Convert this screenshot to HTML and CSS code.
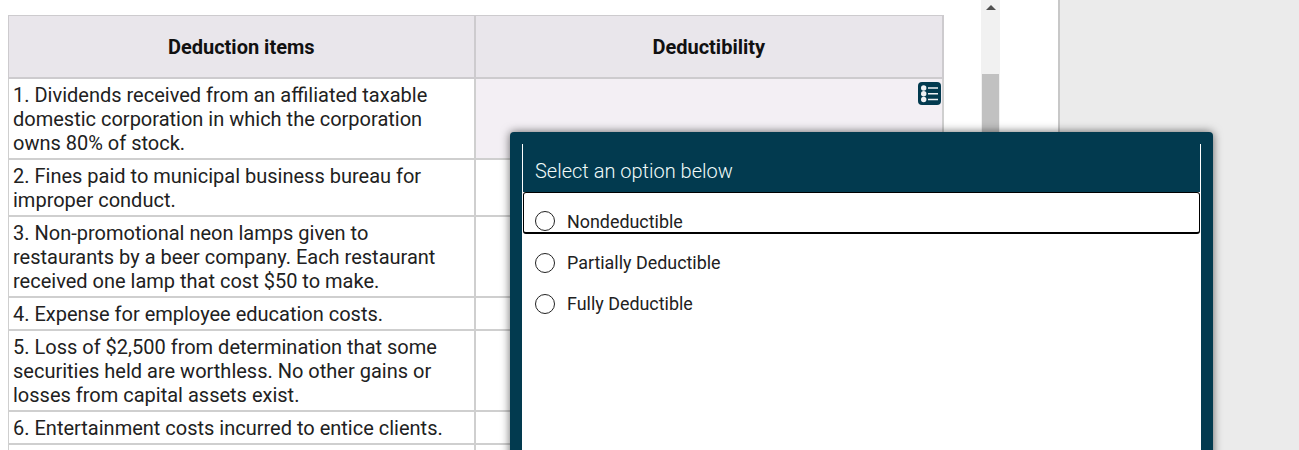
FILE: index.html
```html
<!DOCTYPE html>
<html>

	<head>
		<meta charset="utf-8" />
		<title>Deduction items</title>
		<link rel="stylesheet" href="styles.css">
	</head>

	<body>
		<div class="page">
			<div class="sheet">
				<table class="grid">
					<tr>
						<th class="col-item">Deduction items</th>
						<th>Deductibility</th>
					</tr>
					<tr>
						<td>1. Dividends received from an affiliated taxable domestic corporation in which the corporation owns 80% of stock.</td>
						<td class="answer">
							<span class="list-btn">
								<svg width="23" height="23" viewBox="0 0 23 23">
									<rect width="23" height="23" rx="4" fill="#023a4f"/>
									<circle cx="5.7" cy="6" r="2.7" fill="#eef1f4"/>
									<circle cx="5.7" cy="11.7" r="2.7" fill="#eef1f4"/>
									<circle cx="5.7" cy="17.5" r="2.7" fill="#eef1f4"/>
									<path d="M10 6h10M10 11.7h10M10 17.5h10" stroke="#eef1f4" stroke-width="1.6"/>
								</svg>
							</span>
						</td>
					</tr>
					<tr>
						<td>2. Fines paid to municipal business bureau for improper conduct.</td>
						<td></td>
					</tr>
					<tr>
						<td>3. Non-promotional neon lamps given to restaurants by a beer company. Each restaurant received one lamp that cost $50 to make.</td>
						<td></td>
					</tr>
					<tr>
						<td>4. Expense for employee education costs.</td>
						<td></td>
					</tr>
					<tr>
						<td>5. Loss of $2,500 from determination that some securities held are worthless. No other gains or losses from capital assets exist.</td>
						<td></td>
					</tr>
					<tr>
						<td>6. Entertainment costs incurred to entice clients.</td>
						<td></td>
					</tr>
					<tr>
						<td class="empty"></td>
						<td class="empty"></td>
					</tr>
				</table>
				<div class="scrollbar">
					<span class="arrow-up"></span>
					<span class="thumb"></span>
				</div>
			</div>
			<div class="side"></div>
		</div>

		<div class="modal">
			<div class="modal-inner">
				<div class="modal-title">Select an option below</div>
				<div class="options">
					<label class="option option-focus"><span class="radio"></span>Nondeductible</label>
					<label class="option"><span class="radio"></span>Partially Deductible</label>
					<label class="option"><span class="radio"></span>Fully Deductible</label>
				</div>
			</div>
		</div>
	</body>

</html>
```

FILE: styles.css
```css
*{margin: 0;padding: 0;box-sizing: border-box;}
html,body{height: 450px;overflow: hidden;}
body{
	font-family: Roboto, "Liberation Sans", sans-serif;
	color: #212121;
	background-color: #fff;
}
.page{
	display: flex;
	height: 450px;
}
.sheet{
	display: flex;
	width: 1060px;
	height: 450px;
	padding-left: 8px;
	border-right: 2px solid #c8c8c8;
	background-color: #fff;
}
.side{
	flex: 1;
	background-color: #ebebeb;
}

.grid{
	width: 936px;
	height: 0;
	margin-top: 15px;
	border-collapse: collapse;
	table-layout: fixed;
	font-size: 20px;
	line-height: 24px;
}
.grid th{
	height: 62px;
	padding-top: 2px;
	background-color: #e9e6eb;
	border: 2px solid #cdcbce;
	border-top-width: 1px;
	font-size: 20px;
	font-weight: bold;
	color: #111;
	text-align: center;
}
.col-item{width: 466px;}
.grid td{
	padding: 4px 4px 3px 4px;
	border: 2px solid #cfcfcf;
	vertical-align: top;
}
.grid th:first-child,
.grid td:first-child{border-left-width: 1px;}
.grid td.answer{
	background-color: #f3eff4;
	text-align: right;
	padding: 3px 1px 0 0;
}
.grid td.empty{height: 20px;}
.list-btn{display: block;height: 24px;}

.scrollbar{
	position: relative;
	width: 19px;
	height: 450px;
	margin-left: 37px;
	background-color: #f1f1f1;
}
.arrow-up{
	position: absolute;
	top: 5px;
	left: 5px;
	border-left: 5px solid transparent;
	border-right: 5px solid transparent;
	border-bottom: 5px solid #505050;
}
.thumb{
	position: absolute;
	top: 74px;
	left: 1px;
	width: 17px;
	height: 376px;
	background-color: #c1c1c1;
}

.modal{
	position: absolute;
	top: 132px;
	left: 510px;
	width: 703px;
	height: 340px;
	padding: 12px 12px 0 12px;
	background-color: #023a4f;
	border-radius: 4px;
	box-shadow: 0 0 10px rgba(0,0,0,.6);
}
.modal-inner{
	height: 100%;
	border-left: 1px solid #fff;
	border-right: 1px solid #fff;
}
.modal-title{
	height: 48px;
	padding: 15px 0 0 12px;
	font-size: 20px;
	line-height: 24px;
	font-weight: 300;
	color: #f0fafa;
}
.options{
	height: 260px;
	background-color: #fff;
}
.option{
	display: flex;
	align-items: center;
	height: 41px;
	padding-left: 12px;
	font-size: 17.9px;
	color: #212121;
}
.option-focus{
	height: 42px;
	margin-bottom: 8px;
	border: 1px solid #000;
	border-bottom-width: 2px;
	border-radius: 3px;
	padding-left: 11px;
	align-items: flex-end;
	line-height: 20px;
	overflow: hidden;
}
.radio{
	flex: none;
	width: 20px;
	height: 20px;
	margin-right: 12px;
	border: 1.5px solid #222;
	border-radius: 50%;
	background-color: #fff;
}
.option-focus .radio{margin-bottom: 1px;}
```
